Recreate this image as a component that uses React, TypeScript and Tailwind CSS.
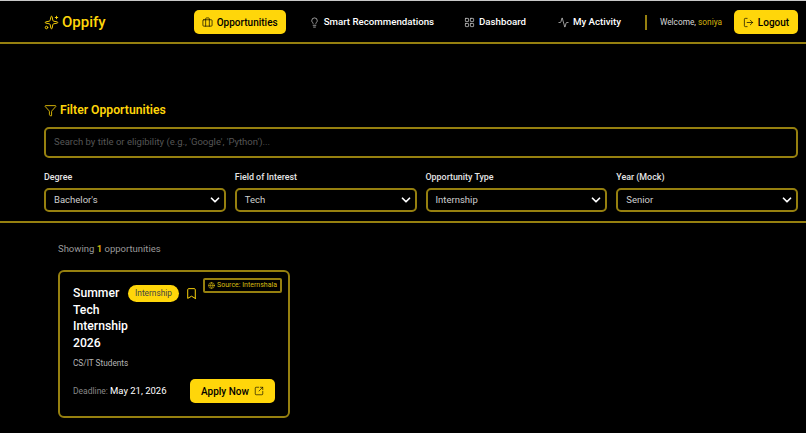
import { Briefcase, Lightbulb, LayoutGrid, Activity, LogOut, Sparkles, Funnel, ChevronDown, Bookmark, Globe, SquareArrowOutUpRight } from 'lucide-react';

function NavItem({ icon: Icon, label, active, className }: { icon: typeof Briefcase; label: string; active?: boolean; className?: string }) {
  return (
    <button
      className={`flex h-6 items-center gap-[4px] rounded-[5px] font-medium whitespace-nowrap ${
        active ? 'bg-[#ffd60a] text-[10px] text-black' : 'text-[9.7px] text-white'
      } ${className ?? ''}`}
    >
      <Icon className={`h-[11px] w-[11px] ${active ? '' : 'text-[#ddd]'}`} strokeWidth={1.5} />
      {label}
    </button>
  );
}

function FilterSelect({ label, value }: { label: string; value: string }) {
  return (
    <div className="min-w-0 flex-1">
      <div className="mb-[5px] text-[8.9px] leading-[12px] font-medium text-[#e5e5e5]">{label}</div>
      <div className="flex h-[24px] items-center justify-between rounded-[5px] border-2 border-[#96800f] pr-[2px] pl-[8px] text-[9.5px] text-[#cfcfcf]">
        {value}
        <ChevronDown className="h-[14px] w-[14px] text-white" strokeWidth={3} />
      </div>
    </div>
  );
}

export default function App() {
  return (
    <div className="min-h-[433px] bg-black font-['Roboto',sans-serif]">
      <header className="flex h-[44px] items-center border-t border-b-2 border-t-[#c8c8c8] border-b-[#96800f] pt-[1px] pr-[8px] pl-[44px]">
        <div className="flex items-center gap-[3px] text-[15px] font-medium text-[#ffd60a]">
          <Sparkles className="h-[15px] w-[15px]" strokeWidth={1.5} />
          Oppify
        </div>
        <nav className="ml-[88px] flex items-center">
          <NavItem icon={Briefcase} label="Opportunities" active className="w-[92px] justify-center" />
          <NavItem icon={Lightbulb} label="Smart Recommendations" className="ml-[23px]" />
          <NavItem icon={LayoutGrid} label="Dashboard" className="ml-[30px]" />
          <NavItem icon={Activity} label="My Activity" className="ml-[32px]" />
        </nav>
        <div className="mr-[13px] ml-[24px] h-[15px] w-[2px] shrink-0 bg-[#96800f]" />
        <div className="text-[8.3px] whitespace-nowrap text-[#d8d8d8]">
          Welcome, <span className="text-[#d4b40c]">soniya</span>
        </div>
        <button className="ml-auto flex h-[24px] w-[64px] shrink-0 items-center justify-center gap-[4px] rounded-[5px] bg-[#ffd60a] text-[10px] font-medium text-black">
          <LogOut className="h-[11px] w-[11px]" strokeWidth={1.5} />
          Logout
        </button>
      </header>

      <section className="border-b-2 border-[#96800f] pt-[57px] pr-[8px] pb-[9px] pl-[44px]">
        <div className="flex items-center gap-[3px] text-[12.2px] leading-[18px] font-semibold text-[#ffd60a]">
          <Funnel className="h-[13px] w-[13px]" strokeWidth={1.5} />
          Filter Opportunities
        </div>
        <div className="mt-[8px] flex h-[31px] items-center rounded-[5px] border-2 border-[#96800f] pl-[8px] text-[9.5px] text-[#555]">
          Search by title or eligibility (e.g., 'Google', 'Python')...
        </div>
        <div className="mt-[13px] flex gap-[9px]">
          <FilterSelect label="Degree" value="Bachelor's" />
          <FilterSelect label="Field of Interest" value="Tech" />
          <FilterSelect label="Opportunity Type" value="Internship" />
          <FilterSelect label="Year (Mock)" value="Senior" />
        </div>
      </section>

      <section className="px-[58px] pt-[19px]">
        <div className="text-[9.5px] leading-[14px] text-[#9a9a9a]">
          Showing <span className="font-semibold text-[#d8b90c]">1</span> opportunities
        </div>
        <article className="relative mt-[14px] h-[148px] w-[232px] rounded-[6px] border-2 border-[#96800f] px-[13px] pt-[13px]">
          <div className="absolute top-[6px] right-[6px] flex h-[15px] items-center gap-[2px] rounded-[2px] border-2 border-[#96800f] px-[3px] text-[7px] whitespace-nowrap text-[#d8bc10]">
            <Globe className="h-[7px] w-[7px]" strokeWidth={2} />
            Source: Internshala
          </div>
          <div className="flex items-start">
            <h3 className="w-[55px] shrink-0 text-[12.2px] leading-[16.5px] font-medium text-white">Summer Tech Internship 2026</h3>
            <span className="flex h-[17px] w-[51px] shrink-0 items-center justify-center rounded-full bg-[#ffd60a] text-[8.3px] text-[#444]">
              Internship
            </span>
            <Bookmark className="mt-[2px] ml-[6px] h-[13px] w-[13px] shrink-0 text-[#ffd60a]" strokeWidth={1.8} />
          </div>
          <div className="mt-[6px] text-[8.25px] leading-[12px] text-[#b5b5b5]">CS/IT Students</div>
          <div className="mt-[10px] flex items-center justify-between">
            <div className="text-[8.5px] whitespace-nowrap text-[#888]">
              Deadline: <span className="text-[9.5px] text-white">May 21, 2026</span>
            </div>
            <button className="flex h-[24px] w-[85px] shrink-0 items-center justify-center gap-[5px] rounded-[5px] bg-[#ffd60a] text-[10px] font-medium text-black">
              Apply Now
              <SquareArrowOutUpRight className="h-[10px] w-[10px]" strokeWidth={1.5} />
            </button>
          </div>
        </article>
      </section>
    </div>
  );
}
